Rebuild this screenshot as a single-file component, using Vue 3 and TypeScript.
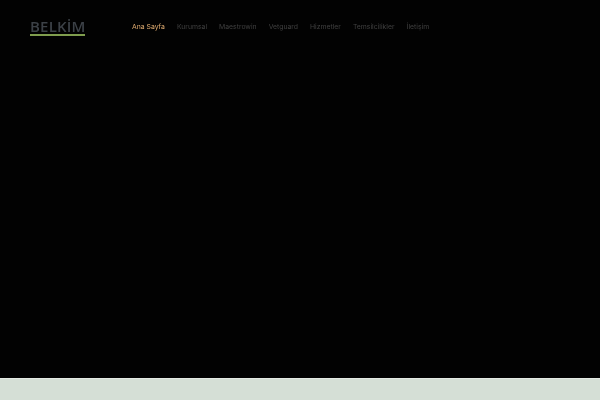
<script setup lang="ts">
const links: string[] = ['Kurumsal', 'Maestrowin', 'Vetguard', 'Hizmetler', 'Temsilcilikler', 'İletişim']
</script>

<template>
  <div class="page">
    <header class="header">
      <div class="logo">
        <span class="logo-text">BELKİM</span>
        <span class="logo-line"></span>
      </div>
      <nav class="nav">
        <a class="link active">Ana Sayfa</a>
        <a v-for="l in links" :key="l" class="link">{{ l }}</a>
      </nav>
    </header>
    <main class="main"></main>
    <footer class="footer"></footer>
  </div>
</template>

<style>
html, body { margin: 0; background: #000; }
</style>

<style scoped>
.page {
  width: 600px;
  height: 400px;
  display: flex;
  flex-direction: column;
  background: #020202;
  font-family: "Inter", "Liberation Sans", sans-serif;
  overflow: hidden;
}
.header {
  display: flex;
  align-items: flex-start;
  padding: 18px 0 0 30px;
  height: 50px;
  box-sizing: border-box;
}
.logo {
  width: 55px;
  display: flex;
  flex-direction: column;
  margin-right: 47px;
  filter: blur(0.4px);
}
.logo-text {
  font-family: "Open Sans", sans-serif;
  font-size: 15px;
  line-height: 16px;
  font-weight: 600;
  letter-spacing: 0.2px;
  color: #3c4147;
  white-space: nowrap;
}
.logo-line {
  height: 2px;
  background: #7f9d4e;
}
.nav {
  display: flex;
  gap: 12px;
  padding-top: 4px;
  filter: blur(0.35px);
}
.link {
  font-size: 6.85px;
  line-height: 10px;
  color: #404040;
  white-space: nowrap;
}
.link.active { color: #e3ae72; }
.main { flex: 1; }
.footer {
  height: 22px;
  background: #d5dfd6;
  border-top: 1px solid #e4e9e4;
  box-sizing: border-box;
}
</style>
